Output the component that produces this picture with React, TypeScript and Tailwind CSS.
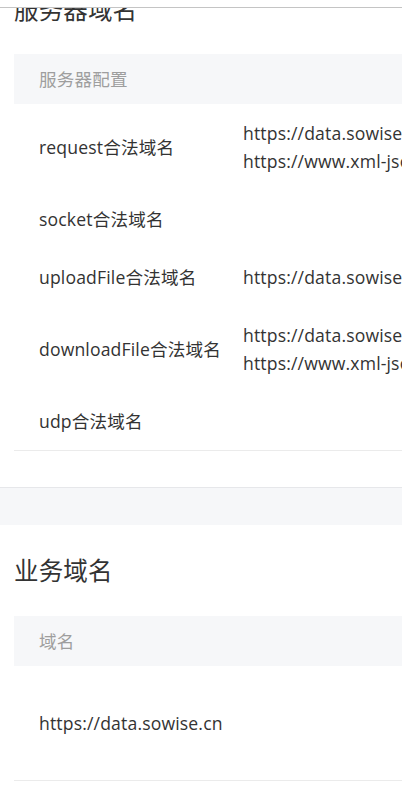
import React from "react";

const font = { fontFamily: '"Open Sans", "Noto Sans CJK SC", sans-serif' };

type Row = { label: string; values: string[] };

const rows: Row[] = [
  { label: "request合法域名", values: ["https://data.sowise.cn", "https://www.xml-json.cn"] },
  { label: "socket合法域名", values: [] },
  { label: "uploadFile合法域名", values: ["https://data.sowise.cn"] },
  { label: "downloadFile合法域名", values: ["https://data.sowise.cn", "https://www.xml-json.cn"] },
  { label: "udp合法域名", values: [] },
];

export default function App() {
  return (
    <div
      className="relative w-[402px] h-[809px] overflow-hidden bg-white text-[#333333] tracking-[0.15px]"
      style={font}
    >
      <div className="absolute left-0 top-0 z-10 h-[8px] w-full bg-white border-b border-[#c4c4c4]" />

      <section className="bg-white pl-[14px] pb-[36px] border-b border-[#e6e7ea] shadow-[0_1px_2px_rgba(0,0,0,0.04)]">
        <h2 className="mt-[-8px] mb-[26px] text-[24.5px] leading-[36px] font-normal whitespace-nowrap">
          服务器域名
        </h2>
        <div className="w-[600px]">
          <div className="h-[50px] flex items-center bg-[#f6f7f9] pl-[25px] text-[17.6px] text-[#9e9e9e]">
            服务器配置
          </div>
          {rows.map((r) => (
            <div
              key={r.label}
              className="flex items-center py-[15px] min-h-[58px] text-[17.6px] leading-[28px]"
            >
              <div className="w-[204px] shrink-0 pl-[25px] whitespace-nowrap">{r.label}</div>
              <div className="pl-[25px] flex flex-col">
                {r.values.map((v, i) => (
                  <div key={i} className="whitespace-nowrap">
                    {v}
                  </div>
                ))}
              </div>
            </div>
          ))}
          <div className="h-px bg-[#ebebeb]" />
        </div>
      </section>

      <div className="h-[37px] bg-[#f6f7f9]" />

      <section className="bg-white pl-[14px] pt-[28px]">
        <h2 className="mb-[27px] text-[24.5px] leading-[36px] font-normal whitespace-nowrap">业务域名</h2>
        <div className="w-[600px]">
          <div className="h-[50px] flex items-center bg-[#f6f7f9] pl-[25px] text-[17.6px] text-[#9e9e9e]">
            域名
          </div>
          <div className="h-[114px] flex items-center pl-[25px] text-[17.6px] leading-[28px]">
            https://data.sowise.cn
          </div>
          <div className="h-px bg-[#ebebeb]" />
        </div>
      </section>
    </div>
  );
}
